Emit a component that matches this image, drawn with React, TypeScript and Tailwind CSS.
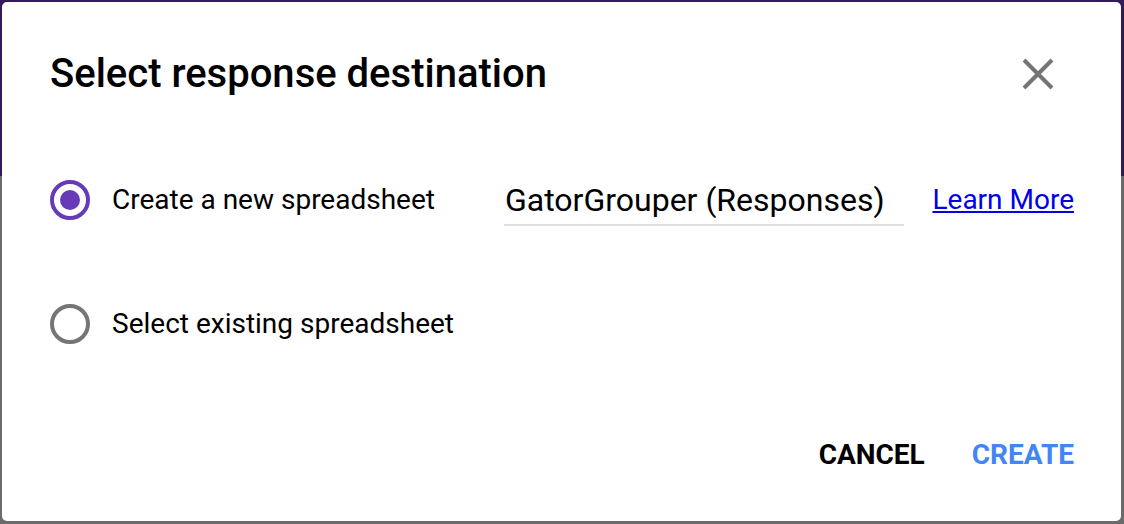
function Radio({ checked }: { checked?: boolean }) {
  return (
    <div
      className={
        'w-[40px] h-[40px] rounded-full border-[4px] flex items-center justify-center flex-none ' +
        (checked ? 'border-[#673ab7]' : 'border-[#757575]')
      }
    >
      {checked && <div className="w-[20px] h-[20px] rounded-full bg-[#673ab7]" />}
    </div>
  )
}

export default function App() {
  return (
    <div
      className="w-full h-[524px] pl-[2px] pt-[2px] pr-[3px] pb-[3px] bg-[linear-gradient(to_bottom,#311b58_176px,#6b6b6b_176px)]"
      style={{ fontFamily: 'Roboto, "Noto Sans", sans-serif' }}
    >
      <div className="h-full bg-white rounded-[5px] flex flex-col pl-[48px] pr-[47px] text-black">
        {/* Header */}
        <div className="flex items-center justify-between h-[72px] mt-[36px]">
          <h1 className="text-[40px] font-medium leading-none">Select response destination</h1>
          <button className="w-[48px] h-[48px] mr-[12px] flex items-center justify-center text-[#757575]">
            <svg width="48" height="48" viewBox="0 0 48 48">
              <path d="M10 10 L38 38 M38 10 L10 38" stroke="currentColor" strokeWidth="4" fill="none" />
            </svg>
          </button>
        </div>

        {/* Option 1 */}
        <div className="flex items-center h-[48px] mt-[66px]">
          <Radio checked />
          <span className="ml-[22px] w-[392px] text-[28px] leading-none">Create a new spreadsheet</span>
          <div className="w-[400px] mt-[10px] border-b-2 border-[#e0e0e0] pb-[8px] pl-[1px] text-[32px] leading-none">
            GatorGrouper (Responses)
          </div>
          <a href="#" className="ml-auto text-[28px] leading-none text-[#0000ee] underline">
            Learn More
          </a>
        </div>

        {/* Option 2 */}
        <div className="flex items-center h-[48px] mt-[76px]">
          <Radio />
          <span className="ml-[22px] text-[28px] leading-none">Select existing spreadsheet</span>
        </div>

        {/* Actions */}
        <div className="flex items-center justify-end h-[48px] mt-[83px] gap-[47px]">
          <button className="text-[28px] font-bold leading-none text-black">CANCEL</button>
          <button className="text-[28px] font-bold leading-none text-[#4285f4]">CREATE</button>
        </div>
      </div>
    </div>
  )
}
